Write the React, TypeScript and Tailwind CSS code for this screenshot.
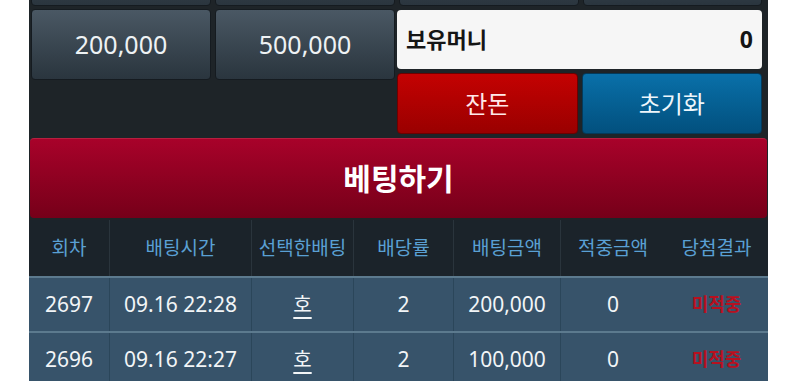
import React from "react";

const font = { fontFamily: '"Noto Sans", "Noto Sans CJK KR", sans-serif' };

const rows = [
  { no: "2697", time: "09.16 22:28", pick: "호", odds: "2", amt: "200,000", win: "0", res: "미적중" },
  { no: "2696", time: "09.16 22:27", pick: "호", odds: "2", amt: "100,000", win: "0", res: "미적중" },
];

const cols = ["w-[81px]", "w-[142px]", "w-[102px]", "w-[100px]", "w-[107px]", "w-[104px]", "w-[103px]"];
const headers = ["회차", "배팅시간", "선택한배팅", "배당률", "배팅금액", "적중금액", "당첨결과"];

function GrayBtn({ label }: { label: string }) {
  return (
    <div className="flex items-center justify-center rounded-[4px] bg-gradient-to-b from-[#4a5864] to-[#2a353e] border border-[#151b20] text-[#eef2f4] text-[25px]">
      {label}
    </div>
  );
}

export default function App() {
  return (
    <div className="w-[800px] h-[381px] bg-white overflow-hidden" style={font}>
      <div className="ml-[29px] w-[739px] h-[381px] bg-[#1e2428] flex flex-col overflow-hidden">
        {/* cut-off top row */}
        <div className="shrink-0 flex mt-[-54px] h-[60px] pl-[2px] pr-[6px] gap-[2px]">
          <div className="w-[364px] grid grid-cols-2 gap-[4px]">
            <GrayBtn label="" />
            <GrayBtn label="" />
          </div>
          <div className="flex-1 grid grid-cols-2 gap-[4px] pl-[2px]">
            <GrayBtn label="" />
            <GrayBtn label="" />
          </div>
        </div>
        {/* main row */}
        <div className="shrink-0 flex mt-[3px] pl-[2px] pr-[6px] gap-[2px] h-[126px]">
          <div className="w-[364px] grid grid-cols-2 gap-[4px] h-[71px]">
            <GrayBtn label="200,000" />
            <GrayBtn label="500,000" />
          </div>
          <div className="flex-1 flex flex-col gap-[4px] pt-[1px]">
            <div className="h-[59px] rounded-[4px] bg-[#f6f6f6] flex items-center justify-between pl-[9px] pr-[9px] text-[#151515] font-bold">
              <span className="text-[22px]">보유머니</span>
              <span className="text-[23px]">0</span>
            </div>
            <div className="h-[61px] grid grid-cols-2 gap-[4px]">
              <div className="rounded-[4px] bg-gradient-to-b from-[#c40202] to-[#9a0000] border border-[#6e0000] flex items-center justify-center text-[#ffe9e9] text-[24px]">
                잔돈
              </div>
              <div className="rounded-[4px] bg-gradient-to-b from-[#0a70a9] to-[#02507e] border border-[#043a5a] flex items-center justify-center text-[#eef6fb] text-[24px]">
                초기화
              </div>
            </div>
          </div>
        </div>
        {/* bet button */}
        <div className="shrink-0 mt-[3px] mx-[1px] h-[80px] rounded-[4px] bg-gradient-to-b from-[#a8022a] to-[#760019] border-t border-[#b5203f] flex items-center justify-center text-white text-[30px] font-bold">
          베팅하기
        </div>
        {/* table */}
        <div className="shrink-0 mt-[2px] flex flex-col">
          <div className="shrink-0 flex h-[58px] bg-[#1b232a] border-b-2 border-[#5c7a8e]">
            {headers.map((h, i) => (
              <div
                key={h}
                className={`${cols[i]} flex items-center justify-center text-[#5aa0d4] text-[19px] ${i < 5 ? "border-r border-[#2a343c]" : ""}`}
              >
                {h}
              </div>
            ))}
          </div>
          {rows.map((r, ri) => {
            const vals = [r.no, r.time, r.pick, r.odds, r.amt, r.win];
            return (
              <div key={ri} className="shrink-0 flex h-[55px] bg-[#37536a] border-b-2 border-[#5c7a8e] text-[#f2f5f7] text-[21px]">
                {vals.map((v, i) => (
                  <div
                    key={i}
                    className={`${cols[i]} flex items-center justify-center ${i < 5 ? "border-r border-[#2b465a]" : ""}`}
                  >
                    {i === 2 ? <span className="underline underline-offset-[5px] text-[20px]">{v}</span> : v}
                  </div>
                ))}
                <div className={`${cols[6]} flex items-center justify-center text-[#b8101f] text-[18px] font-bold`}>
                  {r.res}
                </div>
              </div>
            );
          })}
        </div>
      </div>
    </div>
  );
}
